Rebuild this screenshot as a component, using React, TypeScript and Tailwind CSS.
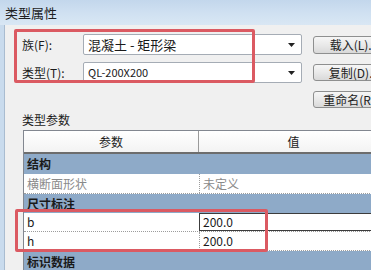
import React from 'react';

const font = { fontFamily: '"Noto Sans CJK SC", "Liberation Sans", sans-serif' };

type Row = {
  name: string;
  value?: string;
  group?: boolean;
  h: string;
  editing?: boolean;
  muted?: boolean;
};

const rows: Row[] = [
  { name: '结构', group: true, h: 'h-[20px]' },
  { name: '横断面形状', value: '未定义', muted: true, h: 'h-[20px]' },
  { name: '尺寸标注', group: true, h: 'h-[19px]' },
  { name: 'b', value: '200.0', editing: true, h: 'h-[19px]' },
  { name: 'h', value: '200.0', h: 'h-[19px]' },
  { name: '标识数据', group: true, h: 'h-[22px]' }
];

const Combo: React.FC<{ text: string; small?: boolean }> = ({ text, small }) => (
  <div className="w-[219px] shrink-0 h-[21px] bg-white border border-[#a5acb5] rounded-[2px] flex items-center pl-[4px] pr-[6px]">
    <span className={`flex-1 text-[#1a1a1a] whitespace-pre ${small ? 'text-[11px]' : 'text-[13px]'}`}>{text}</span>
    <svg width="7" height="4" viewBox="0 0 7 4">
      <path d="M0 0h7L3.5 4z" fill="#222" />
    </svg>
  </div>
);

const Btn: React.FC<{ label: string; h?: string }> = ({ label, h = 'h-[19px]' }) => (
  <div
    className={`w-[82px] ${h} shrink-0 border border-[#8e8f8f] rounded-[3px] bg-gradient-to-b from-[#f6f6f6] via-[#e9e9e9] to-[#d9d9d9] flex items-center justify-center text-[12px] text-[#222] whitespace-nowrap`}
  >
    {label}
  </div>
);

export default function App() {
  return (
    <div className="w-[371px] h-[270px] overflow-hidden relative bg-[#f0f0f0] flex flex-col" style={font}>
      <div className="h-[25px] shrink-0 bg-gradient-to-b from-[#c3d7ec] via-[#cfe0f1] to-[#d9e7f4] flex items-center pl-[5px] text-[13px] text-[#1e1e1e]">
        类型属性
      </div>
      <div className="flex flex-1 min-h-0">
        <div className="w-[5px] shrink-0 bg-[#c9dbed] border-r border-[#a9bcd0]" />
        <div className="flex-1 min-w-0 pl-[17px] flex flex-col">
          <div className="mt-[9px] flex items-center h-[21px]">
            <span className="w-[61px] shrink-0 text-[12px] text-[#1a1a1a]">族(F):</span>
            <Combo text="混凝土 - 矩形梁" />
            <div className="ml-[11px] shrink-0">
              <Btn label="载入(L)..." h="h-[18px]" />
            </div>
          </div>
          <div className="mt-[7px] flex items-center h-[21px]">
            <span className="w-[61px] shrink-0 text-[12px] text-[#1a1a1a]">类型(T):</span>
            <Combo text="QL-200X200" small />
            <div className="ml-[11px] shrink-0">
              <Btn label="复制(D)..." h="h-[17px]" />
            </div>
          </div>
          <div className="mt-[8px] flex">
            <div className="ml-[291px] shrink-0">
              <Btn label="重命名(R)..." h="h-[17px]" />
            </div>
          </div>
          <div className="mt-[4px] h-[16px] text-[12px] leading-[16px] text-[#1a1a1a]">类型参数</div>
          <div className="mt-[2px] ml-[1px] w-[365px] shrink-0 border-l border-t border-[#828790] bg-white flex flex-col">
            <div className="h-[23px] flex bg-gradient-to-b from-white to-[#f3f3f3] border-b-2 border-[#6d6d6d] text-[12px] text-[#1a1a1a]">
              <div className="w-[175px] shrink-0 flex items-center justify-center border-r border-[#9a9a9a]">参数</div>
              <div className="flex-1 flex items-center justify-center">值</div>
            </div>
            {rows.map((r) =>
              r.group ? (
                <div key={r.name} className={`${r.h} bg-[#8eaac8] flex items-center pl-[3px] text-[12px] font-bold text-[#1a1a1a]`}>
                  {r.name}
                </div>
              ) : (
                <div key={r.name} className={`${r.h} flex border-b border-dotted border-[#9c9c9c] text-[12px]`}>
                  <div className={`w-[175px] shrink-0 flex items-center pl-[3px] ${r.muted ? 'text-[#8a8a8a]' : 'text-[#1a1a1a]'}`}>
                    {r.name}
                  </div>
                  <div
                    className={`flex-1 flex items-center pl-[3px] ${
                      r.editing ? 'border border-[#3c3c3c]' : 'border-l border-dotted border-[#9c9c9c]'
                    } ${r.muted ? 'text-[#8a8a8a]' : 'text-[#1a1a1a]'}`}
                  >
                    {r.value}
                  </div>
                </div>
              )
            )}
          </div>
        </div>
      </div>

      {/* annotation boxes */}
      <div className="absolute left-[14px] top-[29px] w-[241px] h-[54px] border-[3px] border-[#db5a62] rounded-[2px] pointer-events-none" />
      <div className="absolute left-[15px] top-[209px] w-[253px] h-[43px] border-[3px] border-[#db5a62] rounded-[2px] pointer-events-none" />
    </div>
  );
}
